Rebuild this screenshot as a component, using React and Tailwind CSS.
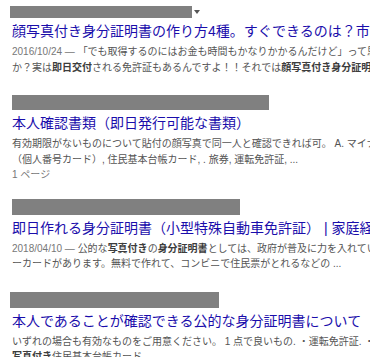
import React from 'react';

// search result list, bars are redacted URL lines
const Result = ({ className, bar, caret, title, children }) => (
    <div className={className}>
        <div className="flex items-center">
            <div className={`bg-[#808080] ${bar}`} />
            {caret && (
                <span className="ml-[2px] h-0 w-0 border-x-[3px] border-t-[4px] border-x-transparent border-t-[#555]" />
            )}
        </div>
        <h3 className="mt-[3px] h-[20px] pl-[2px] text-[14px] font-normal leading-[20px] text-[#1a0dab] whitespace-nowrap">
            {title}
        </h3>
        <div className="mt-[3px] pl-[2px] text-[10px] leading-[15.5px] text-[#545454] whitespace-nowrap">
            {children}
        </div>
    </div>
);

const B = ({ children }) => <b className="font-bold text-[#3c3c3c]">{children}</b>;

const Date = ({ children }) => <span className="text-[#777]">{children} — </span>;

export default function App() {
    return (
        <div className="h-[357px] w-[370px] overflow-hidden bg-white pl-[10px] font-['Liberation_Sans','Noto_Sans_CJK_JP',sans-serif]">
            <Result className="pt-[6px]" bar="h-[12px] w-[182px]" caret title="顔写真付き身分証明書の作り方4種。すぐできるのは？市">
                <div>
                    <Date>2016/10/24</Date>「でも取得するのにはお金も時間もかなりかかるんだけど」って思
                </div>
                <div>
                    か？実は<B>即日交付</B>される免許証もあるんですよ！！それでは<B>顔写真付き身分証明</B>
                </div>
            </Result>

            <Result className="mt-[20px]" bar="ml-[2px] h-[15px] w-[257px]" title="本人確認書類（即日発行可能な書類）">
                <div>有効期限がないものについて貼付の顔写真で同一人と確認できれば可。 A. マイナ</div>
                <div>（個人番号カード）, 住民基本台帳カード, . 旅券, 運転免許証, ...</div>
                <div className="text-[#777]">1 ページ</div>
            </Result>

            <Result className="mt-[16px]" bar="ml-[2px] h-[16px] w-[228px]" title="即日作れる身分証明書（小型特殊自動車免許証） | 家庭経">
                <div>
                    <Date>2018/04/10</Date>公的な<B>写真付き</B>の<B>身分証明書</B>としては、政府が普及に力を入れてい
                </div>
                <div>ーカードがあります。無料で作れて、コンビニで住民票がとれるなどの ...</div>
            </Result>

            <Result className="mt-[20px]" bar="h-[16px] w-[209px]" title="本人であることが確認できる公的な身分証明書について">
                <div>いずれの場合も有効なものをご用意ください。 1 点で良いもの. ・運転免許証. ・.</div>
                <div>
                    <B>写真付き</B>住民基本台帳カード
                </div>
            </Result>
        </div>
    );
}
